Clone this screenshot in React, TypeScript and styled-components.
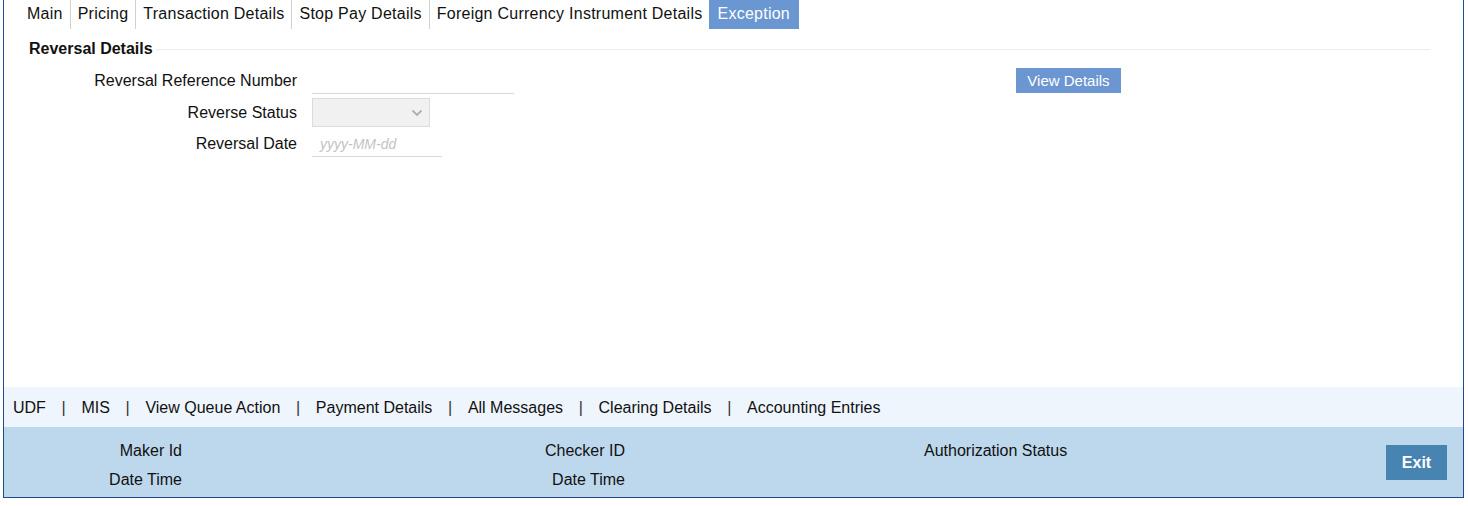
import React from 'react';
import styled, { createGlobalStyle } from 'styled-components';

const GlobalStyle = createGlobalStyle`
  html, body {
    margin: 0;
    padding: 0;
    background: #fff;
    font-family: "Liberation Sans", Arial, sans-serif;
    color: #111;
  }
`;

const tabs = ['Main', 'Pricing', 'Transaction Details', 'Stop Pay Details', 'Foreign Currency Instrument Details', 'Exception'];
const links = ['UDF', 'MIS', 'View Queue Action', 'Payment Details', 'All Messages', 'Clearing Details', 'Accounting Entries'];

const App: React.FC = () => {
  return (
    <>
      <GlobalStyle />
      <Frame>
        <TabBar>
          {tabs.map((t, i) => (
            <Tab key={t} $active={t === 'Exception'} $first={i === 0}>{t}</Tab>
          ))}
        </TabBar>

        <Content>
          <Legend>
            <LegendText>Reversal Details</LegendText>
            <LegendLine />
          </Legend>

          <FormArea>
            <Fields>
              <Row>
                <Label>Reversal Reference Number</Label>
                <TextInput $width={202} />
              </Row>
              <Row>
                <Label>Reverse Status</Label>
                <SelectBox>
                  <svg width="12" height="8" viewBox="0 0 12 8">
                    <path d="M1.5 1.5 L6 6 L10.5 1.5" fill="none" stroke="#aab0b5" strokeWidth="1.8" />
                  </svg>
                </SelectBox>
              </Row>
              <Row>
                <Label>Reversal Date</Label>
                <TextInput $width={130}>
                  <Placeholder>yyyy-MM-dd</Placeholder>
                </TextInput>
              </Row>
            </Fields>
            <ViewButton>View Details</ViewButton>
          </FormArea>
        </Content>

        <LinkBar>
          {links.map((l, i) => (
            <React.Fragment key={l}>
              {i > 0 && <Pipe>|</Pipe>}
              <LinkItem>{l}</LinkItem>
            </React.Fragment>
          ))}
        </LinkBar>

        <Footer>
          <AuditCol $width={178}>
            <AuditLabel>Maker Id</AuditLabel>
            <AuditLabel>Date Time</AuditLabel>
          </AuditCol>
          <AuditCol $width={443}>
            <AuditLabel>Checker ID</AuditLabel>
            <AuditLabel>Date Time</AuditLabel>
          </AuditCol>
          <StatusCol>
            <AuditLabel>Authorization Status</AuditLabel>
          </StatusCol>
          <ExitButton>Exit</ExitButton>
        </Footer>
      </Frame>
    </>
  );
};

export default App;

const Frame = styled.div`
  margin: 0 4px 0 3px;
  height: 498px;
  box-sizing: border-box;
  border: 1px solid #1f4a8f;
  border-top: none;
  display: flex;
  flex-direction: column;
`;

const TabBar = styled.div`
  display: flex;
  height: 29px;
  padding-left: 16px;
`;

const Tab = styled.div<{ $active?: boolean; $first?: boolean }>`
  display: flex;
  align-items: center;
  padding: ${p => (p.$active ? '0 9px 1px 8px' : '0 7px 1px 7px')};
  height: 28px;
  font-size: 16px;
  letter-spacing: 0.25px;
  color: ${p => (p.$active ? '#fff' : '#111')};
  background: ${p => (p.$active ? '#6a96d2' : 'transparent')};
  border-left: ${p => (p.$first || p.$active ? 'none' : '1px solid #d0d0d0')};
`;

const Content = styled.div`
  flex: 1;
  padding: 11px 33px 0 0;
`;

const Legend = styled.div`
  display: flex;
  align-items: center;
  padding-left: 25px;
  height: 18px;
`;

const LegendText = styled.span`
  font-size: 16px;
  font-weight: bold;
  color: #111;
`;

const LegendLine = styled.div`
  flex: 1;
  height: 1px;
  margin-left: 3px;
  background: #ececec;
`;

const FormArea = styled.div`
  display: flex;
  align-items: flex-start;
  margin-top: 10px;
`;

const Fields = styled.div`
  width: 1012px;
  display: flex;
  flex-direction: column;
  gap: 4px;
`;

const Row = styled.div`
  display: flex;
  align-items: center;
  gap: 15px;
`;

const Label = styled.div`
  width: 293px;
  text-align: right;
  font-size: 16px;
  color: #111;
`;

const TextInput = styled.div<{ $width: number }>`
  width: ${p => p.$width}px;
  height: 26px;
  box-sizing: border-box;
  border-bottom: 1px solid #d9d9d9;
  display: flex;
  align-items: center;
  padding-left: 8px;
`;

const Placeholder = styled.span`
  font-size: 14px;
  font-style: italic;
  color: #c3c3c3;
`;

const SelectBox = styled.div`
  width: 118px;
  height: 29px;
  box-sizing: border-box;
  border: 1px solid #dcdcdc;
  background: #f1f1f1;
  display: flex;
  align-items: center;
  justify-content: flex-end;
  padding-right: 6px;
`;

const ViewButton = styled.div`
  width: 105px;
  height: 25px;
  background: #6b96d2;
  color: #fff;
  font-size: 15px;
  display: flex;
  align-items: center;
  justify-content: center;
`;

const LinkBar = styled.div`
  height: 40px;
  background: #eef5fd;
  display: flex;
  align-items: center;
  padding: 1px 0 0 9px;
  box-sizing: border-box;
  font-size: 16px;
`;

const LinkItem = styled.span`
  color: #111;
`;

const Pipe = styled.span`
  margin: 0 15.7px;
  color: #333;
`;

const Footer = styled.div`
  height: 70px;
  background: #bdd8ec;
  display: flex;
  align-items: flex-start;
  padding-top: 9px;
  box-sizing: border-box;
`;

const AuditCol = styled.div<{ $width: number }>`
  width: ${p => p.$width}px;
  display: flex;
  flex-direction: column;
  align-items: flex-end;
`;

const StatusCol = styled.div`
  margin-left: 299px;
`;

const AuditLabel = styled.div`
  font-size: 16px;
  line-height: 29px;
  color: #111;
`;

const ExitButton = styled.div`
  margin: 9px 16px 0 auto;
  width: 61px;
  height: 35px;
  background: #4784b2;
  color: #fff;
  font-weight: bold;
  font-size: 16px;
  display: flex;
  align-items: center;
  justify-content: center;
`;
